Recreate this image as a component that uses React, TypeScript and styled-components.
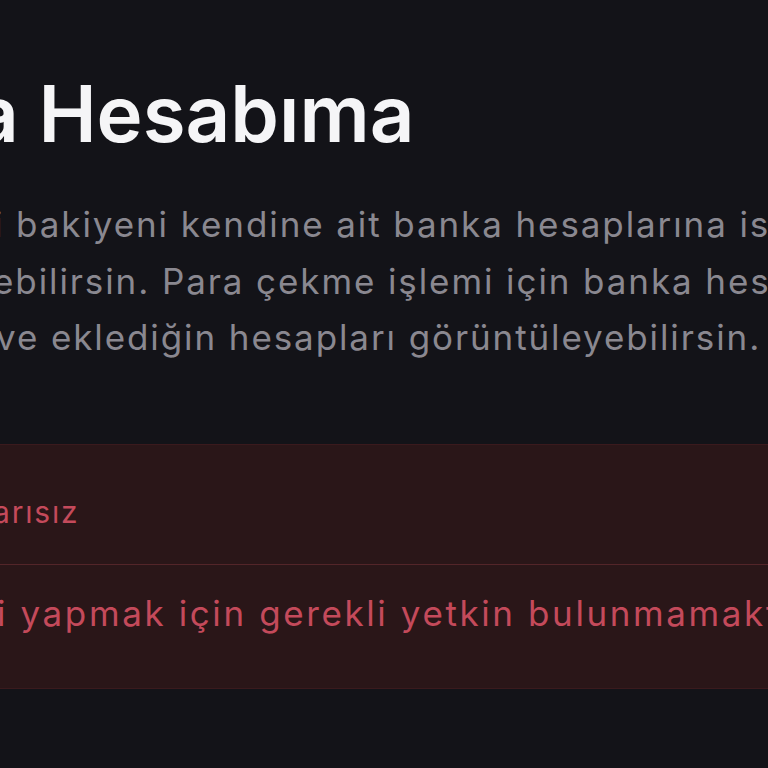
import * as React from "react";
import styled, { createGlobalStyle } from "styled-components";

const GlobalStyle = createGlobalStyle`
    html, body {
        margin: 0;
        padding: 0;
        background: #131318;
    }

    body {
        font-family: Inter, "Noto Sans", "Liberation Sans", sans-serif;
        -webkit-font-smoothing: antialiased;
    }
`

const CPage = styled.div`
    width: 768px;
    height: 768px;
    overflow: hidden;
    background: #131318;
`

const CContent = styled.div`
    display: flex;
    flex-direction: column;
    padding-top: 68px;
`

// a line of text that starts left of the visible area: the prefix hangs off to the left
const CLine = styled.div<{ $at: number }>`
    display: flex;
    white-space: nowrap;
    margin-left: ${p => p.$at}px;
`

const CPrefix = styled.span`
    display: flex;
    justify-content: flex-end;
    width: 0;
`

const CTitle = styled.h1`
    margin: 0;
    font-size: 78px;
    line-height: 92px;
    font-weight: 600;
    color: #f5f5f7;
    letter-spacing: 0;
`

const CDescription = styled.p`
    margin: 36px 0 0;
    font-size: 35px;
    line-height: 56.5px;
    font-weight: 400;
    letter-spacing: 1.9px;
    color: #8a8890;
`

const CAlert = styled.div`
    margin: 78px 0 0 -40px;
    width: 1200px;
    background: #2a1618;
    border: 1px solid #3a1a1d;
`

const CAlertHeader = styled.div`
    padding: 50px 0 35px 40px;
    font-size: 30px;
    line-height: 34px;
    letter-spacing: 1.8px;
    color: #c44a5b;
    border-bottom: 1px solid #532529;
`

const CAlertBody = styled.div`
    padding: 26px 0 53px 40px;
    font-size: 35px;
    line-height: 44px;
    letter-spacing: 2.6px;
    color: #c44a5b;
`

function Line({ at, hidden, children }: { at: number, hidden: string, children: React.ReactNode }) {
    return <CLine $at={at}>
        <CPrefix><span>{hidden}</span></CPrefix>
        <span>{children}</span>
    </CLine>
}

function App() {
    return <CPage>
        <GlobalStyle />
        <CContent>
            <CTitle>
                <Line at={-26} hidden="Bank">a Hesabıma</Line>
            </CTitle>

            <CDescription>
                <Line at={-6} hidden="Cüzdanındak">i bakiyeni kendine ait banka hesaplarına istediğin zaman</Line>
                <Line at={-7} hidden="gönder">ebilirsin. Para çekme işlemi için banka hesabı</Line>
                <Line at={-4} hidden="ekleyebilir ">ve eklediğin hesapları görüntüleyebilirsin.</Line>
            </CDescription>

            <CAlert>
                <CAlertHeader>
                    <Line at={-8} hidden="Baş">arısız</Line>
                </CAlertHeader>
                <CAlertBody>
                    <Line at={-4} hidden="Bu işlem">i yapmak için gerekli yetkin bulunmamaktadır.</Line>
                </CAlertBody>
            </CAlert>
        </CContent>
    </CPage>
}

export default App;
